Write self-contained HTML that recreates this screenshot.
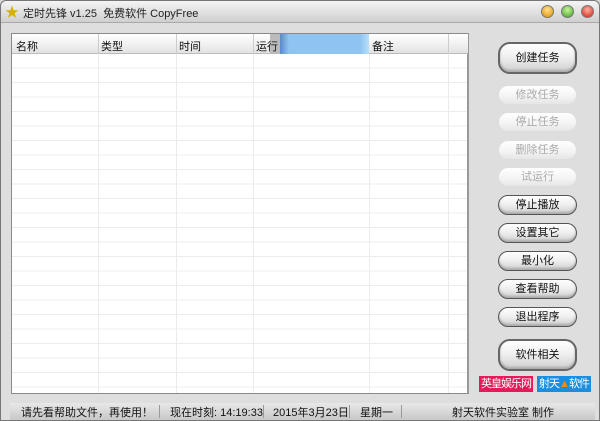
<!DOCTYPE html>
<html><head><meta charset="utf-8"><style>
*{margin:0;padding:0;box-sizing:border-box}
body{width:600px;height:421px;overflow:hidden;font-family:"Liberation Sans","Noto Sans CJK SC",sans-serif;font-size:11px;color:#111;background:#d8d8d8;position:relative}
.win{position:absolute;left:0;top:0;width:600px;height:421px;border:1px solid #777;border-radius:6px 6px 0 0;background:#dedede}
.title{position:absolute;left:0;top:0;width:598px;height:22px;background:linear-gradient(#f4f4f4,#cfcfcf);border-bottom:1px solid #aaa;border-radius:6px 6px 0 0}
.title span{position:absolute;left:22px;top:4px;font-size:11px;color:#222;white-space:nowrap}
.dot{position:absolute;top:4px;width:13px;height:13px;border-radius:50%;border:1px solid #777}
.grid{position:absolute;left:10px;top:32px;width:458px;height:361px;background:#fff;border:1px solid #8a8a8a;border-right:2px solid #999;
background-image:repeating-linear-gradient(#fff 0,#fff 13.5px,#ececec 13.5px,#ececec 14.5px);background-position:0 20px}
.hdr{position:absolute;left:0;top:0;width:456px;height:20px;background:linear-gradient(#fff,#f2f2f2 50%,#e2e2e2);border-bottom:1px solid #bbb}
.hdr span{position:absolute;top:4px;font-size:11px}
.vl{position:absolute;top:0;width:1px;height:359px;background:#ebebeb}
.hv{position:absolute;top:0;width:1px;height:20px;background:#ccc}
.btn{position:absolute;left:497px;width:79px;height:20px;border:1px solid #555;border-radius:10px;background:linear-gradient(#fff,#f0f0f0 45%,#cfcfcf);text-align:center;line-height:18px;font-size:11px;color:#111;box-shadow:inset 0 -2px 2px #aaa}
.dis{border-color:#ddd;color:#aaa;background:linear-gradient(#fff,#f6f6f6 50%,#e6e6e6);box-shadow:none}
.big{height:32px;line-height:28px;border-width:2px;border-color:#666;border-radius:12px}
.status{position:absolute;left:9px;top:402px;width:585px;height:17px;background:linear-gradient(#e8e8e8,#c8c8c8);font-size:11px}
.status span{position:absolute;top:1px;white-space:nowrap}
.sep{position:absolute;top:2px;width:1px;height:13px;background:#999}
.badge{position:absolute;top:375px;width:54px;height:16px;color:#fff;font-size:11px;line-height:16px;text-align:center;white-space:nowrap;overflow:hidden;letter-spacing:-1px}
</style></head><body>
<div class="win">
<div class="title"><span style="left:4px;top:1px;color:#d4b000;font-size:14px">★</span><span>定时先锋 v1.25 &nbsp;免费软件 CopyFree</span>
<div class="dot" style="left:540px;background:radial-gradient(circle at 50% 35%,#ffe08a,#e08a00)"></div>
<div class="dot" style="left:560px;background:radial-gradient(circle at 50% 35%,#c8f59a,#3ca020)"></div>
<div class="dot" style="left:580px;background:radial-gradient(circle at 50% 35%,#ffb0a0,#d02010)"></div>
</div>
<div class="grid">
<div class="vl" style="left:86px"></div><div class="vl" style="left:164px"></div><div class="vl" style="left:241px"></div><div class="vl" style="left:357px"></div><div class="vl" style="left:436px"></div>
<div class="hdr">
<div class="hv" style="left:86px"></div><div class="hv" style="left:164px"></div><div class="hv" style="left:241px"></div><div class="hv" style="left:436px"></div>
<div style="position:absolute;left:258px;top:0;width:10px;height:20px;background:#bbb"></div>
<div style="position:absolute;left:268px;top:0;width:89px;height:20px;background:linear-gradient(90deg,#5a8ac8,#8fc4f0 10%,#8fc4f0 90%,#b8e0fb)"></div>
<span style="left:4px">名称</span><span style="left:89px">类型</span><span style="left:167px">时间</span><span style="left:244px">运行</span><span style="left:360px">备注</span>
</div>
</div>
<div class="btn big" style="top:41px">创建任务</div>
<div class="btn dis" style="top:84px">修改任务</div>
<div class="btn dis" style="top:111px">停止任务</div>
<div class="btn dis" style="top:139px">删除任务</div>
<div class="btn dis" style="top:166px">试运行</div>
<div class="btn" style="top:194px">停止播放</div>
<div class="btn" style="top:222px">设置其它</div>
<div class="btn" style="top:250px">最小化</div>
<div class="btn" style="top:278px">查看帮助</div>
<div class="btn" style="top:306px">退出程序</div>
<div class="btn big" style="top:338px">软件相关</div>
<div class="badge" style="left:478px;background:#e8195a">英皇娱乐网</div>
<div class="badge" style="left:536px;background:#1a8ee0">射天<span style="color:#f80">▲</span>软件</div>
<div class="status">
<span style="left:11px">请先看帮助文件，再使用！</span><div class="sep" style="left:149px"></div>
<span style="left:160px">现在时刻: 14:19:33</span><div class="sep" style="left:253px"></div>
<span style="left:263px">2015年3月23日</span><div class="sep" style="left:339px"></div>
<span style="left:350px">星期一</span><div class="sep" style="left:391px"></div>
<span style="left:442px">射天软件实验室 制作</span>
</div>
</div>
</body></html>
